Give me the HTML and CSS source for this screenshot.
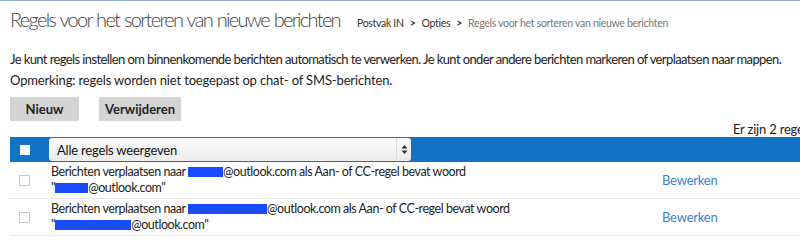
FILE: index.html
```html
<!DOCTYPE html>
<html lang="nl">
<head>
<meta charset="utf-8">
<title>Regels</title>
<link rel="stylesheet" href="styles.css">
</head>
<body>
<div class="page">
  <header class="head">
    <h1 class="title">Regels voor het sorteren van nieuwe berichten</h1>
    <nav class="crumbs">
      <span class="crumb">Postvak IN</span>
      <span class="sep">&gt;</span>
      <span class="crumb">Opties</span>
      <span class="sep">&gt;</span>
      <span class="crumb current">Regels voor het sorteren van nieuwe berichten</span>
    </nav>
  </header>
  <p class="intro long">Je kunt regels instellen om binnenkomende berichten automatisch te verwerken. Je kunt onder andere berichten markeren of verplaatsen naar mappen.</p>
  <p class="intro">Opmerking: regels worden niet toegepast op chat- of SMS-berichten.</p>
  <div class="actions">
    <button class="btn">Nieuw</button>
    <button class="btn">Verwijderen</button>
  </div>
  <div class="count">Er zijn 2 regels</div>
  <div class="bar">
    <span class="chk chk-white"></span>
    <div class="select">
      <span>Alle regels weergeven</span>
      <span class="arrows">
        <svg width="7" height="11" viewBox="0 0 7 11"><path d="M3.5 1 L6.5 4.5 L0.5 4.5 Z M3.5 10 L6.5 6.5 L0.5 6.5 Z" fill="#333"/></svg>
      </span>
    </div>
  </div>
  <div class="row">
    <span class="chk"></span>
    <div class="desc">Berichten verplaatsen naar <span class="red" style="width:35px"></span>@outlook.com als Aan- of CC-regel bevat woord<br>"<span class="red" style="width:33px"></span>@outlook.com"</div>
    <a class="edit" href="#">Bewerken</a>
  </div>
  <div class="row">
    <span class="chk"></span>
    <div class="desc">Berichten verplaatsen naar <span class="red" style="width:79px"></span>@outlook.com als Aan- of CC-regel bevat woord<br>"<span class="red" style="width:76px"></span>@outlook.com"</div>
    <a class="edit" href="#">Bewerken</a>
  </div>
</div>
</body>
</html>
```
FILE: styles.css
```css
html, body {
  margin: 0;
  padding: 0;
  background: #fff;
}
body {
  border-top: 1px solid #8eaad6;
  font-family: Lato, "Noto Sans", sans-serif;
  color: #333;
  overflow: hidden;
  width: 800px;
  height: 247px;
}
.page {
  padding-left: 10px;
}
.head {
  display: flex;
  align-items: baseline;
  height: 48px;
  padding-top: 5px;
  box-sizing: border-box;
}
.title {
  margin: 0;
  font-family: Lato, sans-serif;
  font-weight: 300;
  font-size: 20px;
  line-height: 26px;
  letter-spacing: -1.7px;
  word-spacing: 1px;
  color: #444;
}
.crumbs {
  margin-left: 17px;
  font-size: 10.5px;
  letter-spacing: -0.3px;
  color: #333;
  display: flex;
  gap: 6px;
}
.crumb.current { color: #777; }
.sep { font-weight: bold; }
.intro {
  margin: 0;
  font-size: 13px;
  line-height: 21px;
  letter-spacing: -0.15px;
  white-space: nowrap;
  color: #222;
}
.intro.long {
  letter-spacing: -0.6px;
}
.actions {
  display: flex;
  gap: 20px;
  margin-top: 6px;
}
.btn {
  background: #d4d4d4;
  border: none;
  font-family: Lato, sans-serif;
  font-weight: 700;
  font-size: 13px;
  color: #222;
  height: 24px;
  padding: 0;
  width: 69px;
}
.btn + .btn { width: 82px; }
.count {
  text-align: right;
  font-size: 13px;
  margin-right: -12px;
  height: 16px;
  line-height: 16px;
  white-space: nowrap;
  letter-spacing: -0.2px;
  color: #222;
}
.bar {
  background: #1272c6;
  height: 25px;
  display: flex;
  align-items: center;
}
.chk {
  display: inline-block;
  width: 11px;
  height: 11px;
  border: 1px solid #c8c8c8;
  background: #fff;
  box-sizing: border-box;
  flex: none;
}
.chk-white {
  border: none;
  width: 10px;
  height: 10px;
  margin-left: 10px;
}
.select {
  margin-left: 19px;
  width: 362px;
  height: 23px;
  box-sizing: border-box;
  background: linear-gradient(#fafafa, #ececec);
  border-radius: 3px;
  display: flex;
  align-items: center;
  justify-content: space-between;
  padding-left: 8px;
  font-size: 13px;
  letter-spacing: -0.2px;
  color: #111;
}
.arrows {
  width: 14px;
  height: 23px;
  border-left: 1px solid #ddd;
  display: flex;
  align-items: center;
  justify-content: center;
}
.row {
  display: flex;
  align-items: center;
  border-bottom: 1px solid #e6e6e6;
  height: 37px;
  box-sizing: border-box;
}
.row .chk { margin-left: 9px; margin-right: 21px; }
.desc {
  font-size: 12.5px;
  line-height: 16px;
  letter-spacing: -0.45px;
  width: 611px;
  color: #222;
}
.red {
  display: inline-block;
  height: 10px;
  background: #1a4cff;
  vertical-align: -1px;
}
.edit {
  color: #3a80d2;
  text-decoration: none;
  font-size: 13px;
  letter-spacing: -0.2px;
}
```
